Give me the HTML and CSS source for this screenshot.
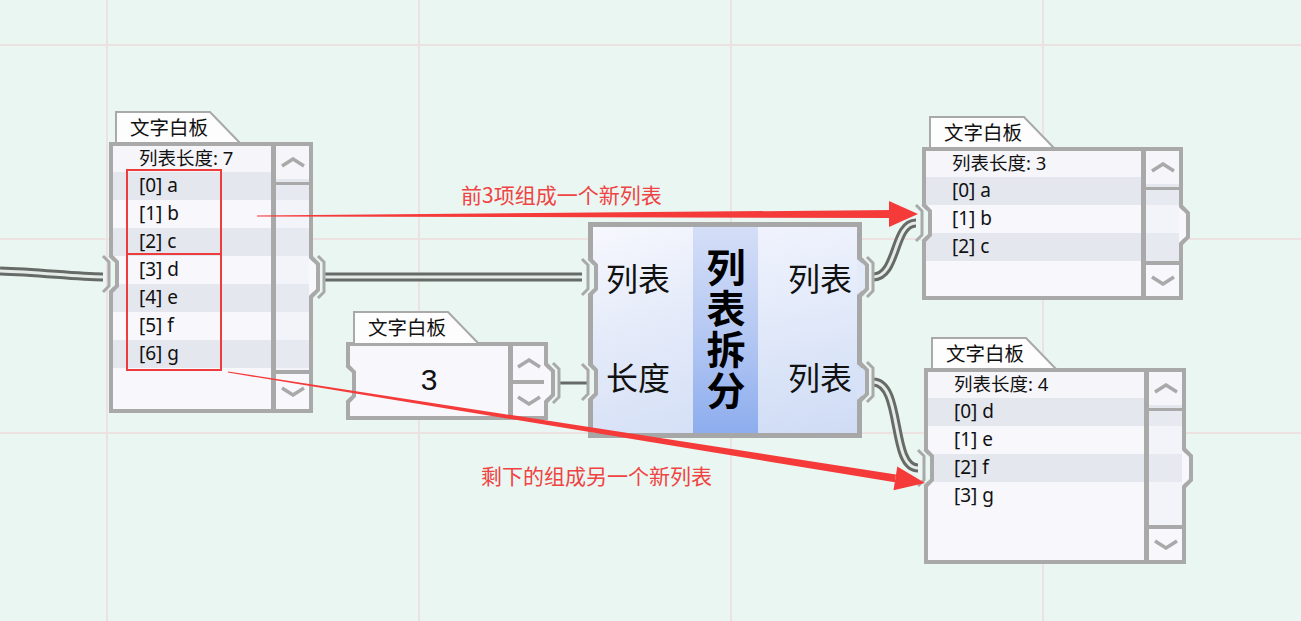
FILE: index.html
```html
<!DOCTYPE html>
<html lang="zh">
<head>
<meta charset="utf-8">
<title>列表拆分</title>
<link rel="stylesheet" href="styles.css">
</head>
<body>
<div class="canvas">

  <!-- source list -->
  <div class="node n1">
    <div class="tab"><svg class="tab-shape" width="126" height="33" viewBox="0 0 126 33"><polygon points="1,33 1,1 95,1 125,32 125,33" /></svg><span>文字白板</span></div>
    <div class="list-body b1">
      <div class="list-head">列表长度: 7</div>
      <div class="row alt">[0] a</div>
      <div class="row">[1] b</div>
      <div class="row alt">[2] c</div>
      <div class="row">[3] d</div>
      <div class="row alt">[4] e</div>
      <div class="row">[5] f</div>
      <div class="row alt">[6] g</div>
      <div class="scrollbar">
        <div class="sb-up"><svg width="26" height="11" viewBox="0 0 26 11"><polyline points="2,9 13,2 24,9"/></svg></div>
        <div class="sb-line"></div>
        <div class="sb-track"></div>
        <div class="sb-down"><svg width="26" height="11" viewBox="0 0 26 11"><polyline points="2,2 13,9 24,2"/></svg></div>
      </div>
      <div class="mark mark-a"></div>
      <div class="mark mark-b"></div>
    </div>
  </div>

  <!-- number -->
  <div class="node n2">
    <div class="tab"><svg class="tab-shape" width="126" height="33" viewBox="0 0 126 33"><polygon points="1,33 1,1 95,1 125,32 125,33" /></svg><span>文字白板</span></div>
    <div class="num-body">
      <div class="num-val">3</div>
      <div class="spin">
        <div class="spin-up"><svg width="26" height="11" viewBox="0 0 26 11"><polyline points="2,9 13,2 24,9"/></svg></div>
        <div class="spin-down"><svg width="26" height="11" viewBox="0 0 26 11"><polyline points="2,2 13,9 24,2"/></svg></div>
      </div>
    </div>
  </div>

  <!-- function -->
  <div class="fn">
    <div class="fn-left"><span>列表</span><span>长度</span></div>
    <div class="fn-mid"><span>列表拆分</span></div>
    <div class="fn-right"><span>列表</span><span>列表</span></div>
  </div>

  <!-- result 1 -->
  <div class="node n3">
    <div class="tab"><svg class="tab-shape" width="126" height="33" viewBox="0 0 126 33"><polygon points="1,33 1,1 95,1 125,32 125,33" /></svg><span>文字白板</span></div>
    <div class="list-body b3">
      <div class="list-head">列表长度: 3</div>
      <div class="row alt">[0] a</div>
      <div class="row">[1] b</div>
      <div class="row alt">[2] c</div>
      <div class="scrollbar">
        <div class="sb-up"><svg width="26" height="11" viewBox="0 0 26 11"><polyline points="2,9 13,2 24,9"/></svg></div>
        <div class="sb-line"></div>
        <div class="sb-track"></div>
        <div class="sb-down"><svg width="26" height="11" viewBox="0 0 26 11"><polyline points="2,2 13,9 24,2"/></svg></div>
      </div>
    </div>
  </div>

  <!-- result 2 -->
  <div class="node n4">
    <div class="tab"><svg class="tab-shape" width="126" height="33" viewBox="0 0 126 33"><polygon points="1,33 1,1 95,1 125,32 125,33" /></svg><span>文字白板</span></div>
    <div class="list-body b4">
      <div class="list-head">列表长度: 4</div>
      <div class="row alt">[0] d</div>
      <div class="row">[1] e</div>
      <div class="row alt">[2] f</div>
      <div class="row">[3] g</div>
      <div class="scrollbar">
        <div class="sb-up"><svg width="26" height="11" viewBox="0 0 26 11"><polyline points="2,9 13,2 24,9"/></svg></div>
        <div class="sb-line"></div>
        <div class="sb-track"></div>
        <div class="sb-down"><svg width="26" height="11" viewBox="0 0 26 11"><polyline points="2,2 13,9 24,2"/></svg></div>
      </div>
    </div>
  </div>

  <!-- wires, connectors, arrows -->
  <svg class="overlay" width="1301" height="621" viewBox="0 0 1301 621">
    <g class="wire-dark">
      <path d="M0,271 C40,272 75,277 103,277"/>
      <path d="M324,277 L582,277"/>
      <path d="M873,277 C898,277 893,223 916,223"/>
      <path d="M873,382 C903,382 890,468 918,468"/>
    </g>
    <g class="wire-light">
      <path d="M0,271 C40,272 75,277 103,277"/>
      <path d="M324,277 L582,277"/>
      <path d="M873,277 C898,277 893,223 916,223"/>
      <path d="M873,382 C903,382 890,468 918,468"/>
    </g>
    <path class="wire-single" d="M559,383 L590,383"/>

    <!-- inputs -->
    <g class="cut">
      <polygon points="108,256 115,263 115,285 108,292"/>
      <polygon points="345,366 352,373 352,395 345,402"/>
      <polygon points="587,259 594,266 594,288 587,295"/>
      <polygon points="587,364 594,371 594,393 587,400"/>
      <polygon points="921,205 928,212 928,234 921,241"/>
      <polygon points="923,450 930,457 930,479 923,486"/>
    </g>
    <g class="edge4">
      <polyline points="110,255 117,262 117,286 110,293"/>
      <polyline points="347,365 354,372 354,396 347,403"/>
      <polyline points="589,258 596,265 596,289 589,296"/>
      <polyline points="589,363 596,370 596,394 589,401"/>
      <polyline points="923,204 930,211 930,235 923,242"/>
      <polyline points="925,449 932,456 932,480 925,487"/>
    </g>
    <g class="edge3">
      <polyline points="103,256 109,262 109,286 103,292"/>
      <polyline points="582,259 588,265 588,289 582,295"/>
      <polyline points="582,364 588,370 588,394 582,400"/>
      <polyline points="916,205 922,211 922,235 916,241"/>
      <polyline points="918,450 924,456 924,480 918,486"/>
    </g>

    <!-- outputs -->
    <polygon class="fill-body" points="309,258 317,266 317,288 309,296"/>
    <polygon class="fill-body" points="544,365 552,373 552,393 544,401"/>
    <polygon class="fill-body" points="1179,207 1187,215 1187,235 1179,243"/>
    <polygon class="fill-body" points="1182,450 1190,458 1190,478 1182,486"/>
    <polygon points="857,259 866,267 866,287 857,295" fill="#e3eafa"/>
    <polygon points="857,364 866,372 866,392 857,400" fill="#d7e1f7"/>
    <g class="edge4">
      <polyline points="311,257 318,264 318,290 311,297"/>
      <polyline points="546,364 553,371 553,395 546,402"/>
      <polyline points="860,258 867,265 867,289 860,296"/>
      <polyline points="860,363 867,370 867,394 860,401"/>
      <polyline points="1181,206 1188,213 1188,237 1181,244"/>
      <polyline points="1184,449 1191,456 1191,480 1184,487"/>
    </g>
    <g class="edge3">
      <polyline points="318,256 324,262 324,292 318,298"/>
      <polyline points="553,363 559,369 559,397 553,403"/>
      <polyline points="867,257 873,263 873,291 867,297"/>
      <polyline points="867,362 873,368 873,396 867,402"/>
    </g>

    <!-- annotation arrows -->
    <g class="arrow">
      <polygon points="257,215.5 893,210 893,218 257,216.5"/>
      <polygon points="889,201 918,214 889,227"/>
      <polygon points="227.9,372.5 228.1,371.5 896.0,474.4 894.8,482.3"/>
      <polygon points="893.5,490.2 925,483 897.3,466.4"/>
    </g>
  </svg>

  <div class="note note-1">前3项组成一个新列表</div>
  <div class="note note-2">剩下的组成另一个新列表</div>
</div>
</body>
</html>
```

FILE: styles.css
```css
* {
  box-sizing: border-box;
  margin: 0;
  padding: 0;
}

body {
  margin: 0;
  background: #eaf6f1;
  font-family: "Noto Sans", "Noto Sans CJK SC", sans-serif;
  color: #111;
}

.canvas {
  position: relative;
  width: 1301px;
  height: 621px;
  overflow: hidden;
  background-color: #eaf6f1;
  background-image:
    linear-gradient(to right, #ece2e1 2px, transparent 2px),
    linear-gradient(to bottom, #ece2e1 2px, transparent 2px);
  background-size: 312px 100%, 100% 194px;
  background-position: 106px 0, 0 44px;
}

/* ---------- nodes ---------- */
.node {
  position: absolute;
  display: flex;
  flex-direction: column;
  align-items: flex-start;
}

.n1 { left: 109px; top: 111px; }
.n2 { left: 346px; top: 311px; }
.n3 { left: 922px; top: 116px; }
.n4 { left: 924px; top: 337px; }

.tab {
  position: relative;
  width: 126px;
  height: 33px;
  margin-left: 6px;
  margin-bottom: -2px;
  padding-left: 15px;
  font-size: 19.5px;
  line-height: 33px;
  color: #111;
}
.n2 .tab,
.n3 .tab,
.n4 .tab { margin-left: 7px; }

.tab-shape {
  position: absolute;
  left: 0;
  top: 0;
}
.tab-shape polygon {
  fill: #fdfdfd;
  stroke: #a9a9a9;
  stroke-width: 2;
}
.tab span {
  position: relative;
}

/* ---------- list boards ---------- */
.list-body {
  position: relative;
  border: 4px solid #a9a9a9;
  background: #f7f7fc;
  font-size: 19px;
}
.b1 { width: 204px; height: 271px; }
.b3 { width: 261px; height: 153px; }
.b4 { width: 262px; height: 196px; }

.list-head {
  height: 26px;
  line-height: 24px;
  padding-left: 26px;
  font-size: 18.5px;
  background: #f5f5fa;
}
.row {
  height: 28px;
  line-height: 27px;
  padding-left: 26px;
}
.row.alt {
  background: #e4e7ee;
}

.scrollbar {
  position: absolute;
  top: 0;
  right: 0;
  bottom: 0;
  width: 38px;
  border-left: 5px solid #a9a9a9;
  display: flex;
  flex-direction: column;
}
.sb-up {
  height: 33px;
  background: #f5f5fa;
  display: flex;
  align-items: center;
  justify-content: center;
}
.sb-line {
  margin-top: 3px;
  height: 3px;
  background: #a9a9a9;
}
.sb-track {
  flex: 1;
  background: rgba(236, 237, 243, 0.35);
}
.sb-down {
  height: 35px;
  border-top: 4px solid #a9a9a9;
  background: #f7f7fc;
  display: flex;
  align-items: center;
  justify-content: center;
}
.b1 .sb-down { height: 39px; }

.sb-up svg polyline,
.sb-down svg polyline,
.spin svg polyline {
  fill: none;
  stroke: #a9a9a9;
  stroke-width: 3.5;
}

.mark {
  position: absolute;
  left: 13px;
  width: 96px;
  border: 2px solid #ee3b3b;
}
.mark-a { top: 23px; height: 86px; }
.mark-b { top: 107px; height: 118px; }

/* ---------- number board ---------- */
.num-body {
  width: 202px;
  height: 78px;
  border: 4px solid #a9a9a9;
  background: #f7f7fc;
  display: flex;
}
.num-val {
  flex: 1;
  display: flex;
  align-items: center;
  justify-content: center;
  font-family: "Liberation Sans", "Noto Sans", sans-serif;
  font-size: 30px;
  padding-bottom: 2px;
}
.spin {
  width: 36px;
  border-left: 5px solid #a9a9a9;
  display: flex;
  flex-direction: column;
}
.spin-up {
  height: 34px;
  display: flex;
  align-items: center;
  justify-content: center;
}
.spin-down {
  flex: 1;
  border-top: 4px solid #a9a9a9;
  display: flex;
  align-items: center;
  justify-content: center;
}

/* ---------- function block ---------- */
.fn {
  position: absolute;
  left: 588px;
  top: 222px;
  width: 274px;
  height: 216px;
  border: 5px solid #a7a7a7;
  display: grid;
  grid-template-columns: 100px 65px 1fr;
  font-family: "Noto Sans CJK SC", sans-serif;
  font-size: 32px;
}
.fn-left {
  background: linear-gradient(160deg, #f7f8fe 0%, #e4eaf9 50%, #d5e0f6 100%);
  display: flex;
  flex-direction: column;
  justify-content: space-around;
  padding-left: 13px;
  padding-bottom: 8px;
  line-height: 40px;
}
.fn-mid {
  background: linear-gradient(to bottom, #d4def7 0%, #b6c9f3 50%, #8dadee 100%);
  display: flex;
  align-items: center;
  justify-content: center;
}
.fn-mid span {
  writing-mode: vertical-rl;
  font-size: 39px;
  font-weight: bold;
  letter-spacing: 2px;
  line-height: 1;
  color: #000;
}
.fn-right {
  background: linear-gradient(170deg, #f0f3fd 0%, #e0e8f9 50%, #cfdcf5 100%);
  display: flex;
  flex-direction: column;
  justify-content: space-around;
  align-items: flex-end;
  padding-right: 5px;
  padding-bottom: 8px;
  line-height: 40px;
}

/* ---------- overlay ---------- */
.overlay {
  position: absolute;
  left: 0;
  top: 0;
  pointer-events: none;
}
.wire-dark path {
  fill: none;
  stroke: #676b68;
  stroke-width: 9;
}
.wire-light path {
  fill: none;
  stroke: #e4ebe8;
  stroke-width: 3;
}
.wire-single {
  fill: none;
  stroke: #676b68;
  stroke-width: 3;
}
.cut polygon {
  fill: #eaf6f1;
}
.fill-body {
  fill: #f7f7fc;
}
.edge4 polyline {
  fill: none;
  stroke: #a9a9a9;
  stroke-width: 4;
}
.edge3 polyline {
  fill: none;
  stroke: #a9a9a9;
  stroke-width: 3;
}
.arrow polygon {
  fill: #f53a3a;
}

.note {
  position: absolute;
  color: #f04343;
  font-family: "Noto Sans CJK SC", sans-serif;
  font-size: 21px;
  line-height: 24px;
  white-space: nowrap;
}
.note-1 { left: 461px; top: 182px; }
.note-2 { left: 481px; top: 463px; }
```
